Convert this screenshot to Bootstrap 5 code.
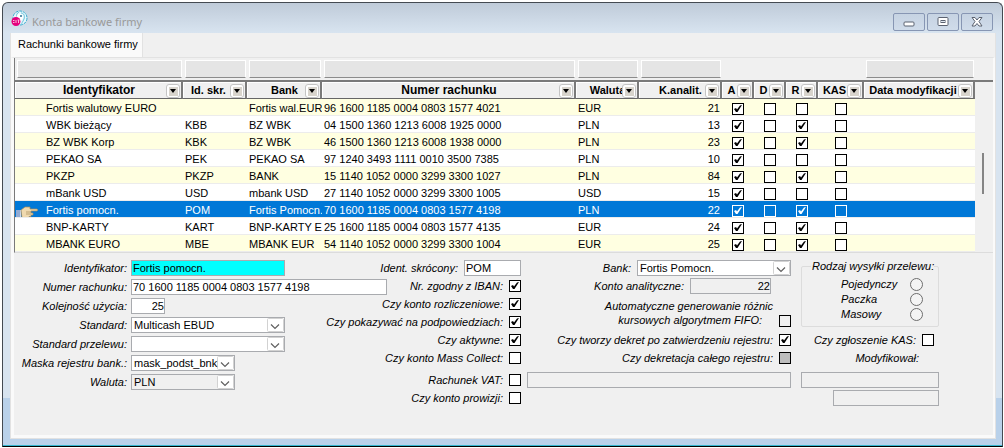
<!DOCTYPE html>
<html lang="pl">
<head>
<meta charset="utf-8">
<meta name="viewport" content="width=device-width, initial-scale=1">
<title>Konta bankowe firmy</title>
<link href="https://cdn.jsdelivr.net/npm/bootstrap@5.3.0/dist/css/bootstrap.min.css" rel="stylesheet">
<style>
  body { font: 11px/13px "Liberation Sans", Arial, sans-serif; color: #000; background: #fff; padding: 2px 1px 1px 2px; }
  input, select, button { font: inherit; color: inherit; }

  /* window frame */
  .win { border: 1px solid #444a52; border-bottom-color: #000; border-radius: 6px 6px 0 0; padding: 0 6px 7px 7px;
    background: linear-gradient(to bottom, #bfcbd9 0, #d8e4f0 30px, #d8e4f0 395px, #b9d1ea 395px);
    box-shadow: inset 0 -1px #35b6cf; }
  .titlebar { height: 30px; color: #999; font: 11px/16px "Noto Sans", "Open Sans", sans-serif; padding: 0 3px 0 1px; }
  .win-btn { width: 32px; height: 18px; border: 1px solid #8796b3; border-radius: 2px; background: linear-gradient(#c6d3e2, #d0dcea); }
  .client { background: #f0f0f0; border: 1px solid #e2e2e2; border-top: 0; }

  /* tab strip */
  .tabs { height: 24px; }
  .tabs .nav-link { background: #fafafa; color: #000; border-radius: 0; border-right: 1px solid #e2e2e2; padding: 5px 4px 0 7px; height: 24px; }
  .pane { border: 3px solid #fafafa; border-top: 1px solid #e2e2e2; border-right-width: 2px; }

  /* grid */
  .grid-table { table-layout: fixed; width: 100%; border-collapse: separate; border-spacing: 0; background: #fff; }
  .grid-box { border-left: 1px solid #7a7a7a; border-bottom: 1px solid #dcdcdc; }
  .grid-table td.blank { background: #f0f0f0; padding: 0; height: 22px; border: 0; }
  .grid-table td.blank input { display: block; width: calc(100% - 3px); height: 18px; margin: 0 1px 0 2px; background: #e5e5e5; border: 1px solid #fff; border-bottom-color: #8c8c8c; border-radius: 0; padding: 0; }
  .grid-table th { height: 19px; position: relative; background: #f0f0f0; padding: 1px 0 0 2px; text-align: center; font-weight: 700; white-space: nowrap; overflow: hidden;
    border-top: 2px solid #7a7a7a; border-bottom: 1px solid #666; border-right: 2px solid #7a7a7a; box-shadow: inset 1px 1px #fff; }
  .grid-table th.wide { font-size: 12px; }
  .grid-table th.side { padding-right: 13px; }
  .grid-table td { height: 17px; padding: 1px 2px 0; white-space: nowrap; overflow: hidden; border-bottom: 1px solid #ececec; line-height: 14px; }
  .grid-table td.tick { padding: 3px 0 0; text-align: center; }
  .grid-table .name { padding-left: 31px; position: relative; }
  .grid-table .bank { padding-right: 0; }
  .grid-table tr.odd td { background: #ffffe1; }
  .grid-table tr.current td { background: #0078d7; color: #fff; }
  .hand { position: absolute; left: 1px; top: 5px; }
  .menu-btn { position: absolute; right: 1px; top: 2px; width: 14px; height: 14px; padding: 0; border: 1px solid #c4c4c4; border-radius: 3px; background: #fff; display: flex; align-items: center; justify-content: center; }
  .menu-btn span { width: 9px; height: 9px; background: #d8d4cc; display: flex; align-items: center; justify-content: center; }
  .menu-btn span::before { content: ""; border: 3px solid transparent; border-top: 4px solid #000; border-bottom: 0; }
  .lane { width: 18px; flex: none; border-top: 2px solid #7a7a7a; margin-top: 22px; }
  .thumb { width: 2px; height: 41px; background: #858585; margin: 71px auto 0 7px; }

  /* tick boxes and radios */
  .box { appearance: none; flex: none; width: 12px; height: 12px; margin: 0; border: 1px solid #000; background: #fff center/10px 10px no-repeat; display: block; }
  td .box { margin: 0 auto; }
  .box:checked { background-image: url("data:image/svg+xml,%3Csvg xmlns='http://www.w3.org/2000/svg' viewBox='0 0 10 10'%3E%3Cpath d='M1 5L3 4 4 5.500 7 1.500 9 1 4.500 8 3 8z'/%3E%3C/svg%3E"); }
  .current .box { border-color: #fff; background-color: transparent; }
  .current .box:checked { background-image: url("data:image/svg+xml,%3Csvg xmlns='http://www.w3.org/2000/svg' viewBox='0 0 10 10'%3E%3Cpath fill='white' d='M1 5L3 4 4 5.500 7 1.500 9 1 4.500 8 3 8z'/%3E%3C/svg%3E"); }
  .box.plain { background-color: #f0f0f0; }
  .box.gray { background-color: #bdbdbd; }
  .dot { appearance: none; flex: none; width: 13px; height: 13px; margin: 0; border: 1px solid #6d6d6d; border-radius: 50%; background: #f4f4f4; }

  /* form below the grid */
  .details { padding: 7px 50px 28px 0; }
  .details label, .details legend, .details .note { font-style: italic; white-space: nowrap; }
  .fld { height: 16px; border: 1px solid #a9abaf; border-radius: 0; background-color: #fff; padding: 0 1px; }
  .fld:disabled { background-color: #f0f0f0; color: #000; opacity: 1; }
  select.fld { appearance: none; padding: 0 14px 0 2px; line-height: 14px;
    background-image: url("data:image/svg+xml,%3Csvg xmlns='http://www.w3.org/2000/svg' viewBox='0 0 17 14'%3E%3Crect x='.5' y='.5' width='16' height='13' rx='1' fill='white' stroke='%23d2d2d2'/%3E%3Cpath d='M4 6.500l4 4 4-4' fill='none' stroke='%23606060' stroke-width='1.200'/%3E%3C/svg%3E");
    background-position: right center; background-size: 17px 14px; background-repeat: no-repeat; }
  .num { text-align: right; padding-right: 0; }
  .cyan { background-color: #0ff; }
  .w-xs { width: 34px; } .w-s { width: 57px; } .w-m { width: 81px; } .w-l { width: 104px; } .w-xl { width: 154px; } .w-acc { width: 256px; } .w-date { width: 106px; }
  .first { display: grid; grid-template-columns: 113px 154px; column-gap: 4px; row-gap: 3px; width: 271px; flex: none; }
  .first label { text-align: right; line-height: 16px; justify-self: end; }
  .second { width: 236px; flex: none; }
  .second, .third { margin-top: -1px; }
  .line { display: flex; align-items: center; justify-content: flex-end; gap: 6px; height: 18px; }
  .line.tall { height: 28px; align-items: flex-end; }
  .group-gap { margin-top: 4px; }
  .third { width: 270px; flex: none; }
  .fourth { width: 138px; flex: none; margin-left: 10px; }
  .note { line-height: 14px; }
  .kind { border: 1px solid #dcdcdc; border-radius: 2px; padding: 0 15px 0 39px; height: 67px; }
  .kind legend { float: none; width: auto; font-size: 11px; line-height: 13px; margin: 0 0 4px -30px; padding: 0 0 0 1px; }
  .kind .line { height: 15px; justify-content: space-between; }
  .inset-s { padding-right: 5px; } .inset-l { padding-right: 20px; } .vat { padding-left: 6px; }
</style>
</head>
<body class="min-vh-100 d-flex">
<main class="win flex-fill d-flex flex-column">
  <header class="titlebar d-flex align-items-center">
    <svg width="17" height="17" viewBox="0 0 17 17" class="me-1 flex-shrink-0" aria-hidden="true">
      <circle cx="9" cy="8" r="7" fill="#e6f7fc" stroke="#3aaed0" stroke-dasharray="3 1"/>
      <path d="M8 2c-2 1-3 3-2 5M10 3c3 0 4 3 3 6-1 3-3 4-2 6" fill="none" stroke="#6cc3dc"/>
      <path d="M7 4c3-1 5 1 5 4l-3 4-4-4z" fill="#fff"/><circle cx="10" cy="6" r="1" fill="#2b6f95"/>
      <circle cx="5" cy="11.500" r="4.500" fill="#e5007d"/><path d="M2 10.500h1.500M2 12.500h1.500M5 10v3M6.500 10h2M7.500 10v3" stroke="#f9b6d9" fill="none"/>
    </svg>
    <span class="flex-fill pt-2">Konta bankowe firmy</span>
    <div class="d-flex pt-2" style="gap:2px">
      <button class="win-btn p-0 d-flex justify-content-center align-items-center" aria-label="Minimalizuj"><svg width="12" height="12"><rect x="1" y="6" width="10" height="4" rx="1" fill="#fff" stroke="#5b6270"/></svg></button>
      <button class="win-btn p-0 d-flex justify-content-center align-items-center" aria-label="Maksymalizuj"><svg width="12" height="12"><rect x="1" y="1.500" width="10" height="8" rx="1" fill="#fff" stroke="#5b6270"/><rect x="4" y="4.500" width="4" height="2" fill="#dfe7f0" stroke="#5b6270"/></svg></button>
      <button class="win-btn p-0 d-flex justify-content-center align-items-center" aria-label="Zamknij"><svg width="12" height="12"><path d="M1 1.500h3l2 2.500 2-2.500h3L8 5.500l3 4.500H8L6 7.500 4 10H1l3-4.500z" fill="#fff" stroke="#5b6270"/></svg></button>
    </div>
  </header>

  <div class="client flex-fill d-flex flex-column">
    <nav class="tabs nav"><a class="nav-link" href="#pane">Rachunki bankowe firmy</a></nav>
    <section class="pane flex-fill" id="pane">
      <div class="d-flex grid-box">
        <table class="grid-table">
          <colgroup>
            <col style="width:168px"><col style="width:64px"><col style="width:75px"><col style="width:254px"><col style="width:63px"><col style="width:83px">
            <col style="width:32px"><col style="width:32px"><col style="width:32px"><col style="width:46px"><col>
          </colgroup>
          <thead>
            <tr id="filters"></tr>
            <tr id="heads"></tr>
          </thead>
          <tbody id="rows"></tbody>
        </table>
        <div class="lane"><div class="thumb"></div></div>
      </div>

      <form class="details d-flex align-items-start">
        <div class="first">
          <label for="f1">Identyfikator:</label><input id="f1" class="fld w-xl cyan" value="Fortis pomocn.">
          <label for="f2">Numer rachunku:</label><input id="f2" class="fld w-acc" value="70 1600 1185 0004 0803 1577 4198">
          <label for="f3">Kolejność użycia:</label><input id="f3" class="fld w-xs num" value="25">
          <label for="f4">Standard:</label><select id="f4" class="fld w-xl"><option>Multicash EBUD</option></select>
          <label for="f5">Standard przelewu:</label><select id="f5" class="fld w-xl"><option></option></select>
          <label for="f6">Maska rejestru bank.:</label><select id="f6" class="fld w-l"><option>mask_podst_bnk</option></select>
          <label for="f7">Waluta:</label><select id="f7" class="fld w-l" disabled><option>PLN</option></select>
        </div>

        <div class="second">
          <div class="line"><label for="s1">Ident. skrócony:</label><input id="s1" class="fld w-s" value="POM"></div>
          <div class="line"><label for="s2">Nr. zgodny z IBAN:</label><input id="s2" class="box" type="checkbox" checked></div>
          <div class="line"><label for="s3">Czy konto rozliczeniowe:</label><input id="s3" class="box" type="checkbox" checked></div>
          <div class="line"><label for="s4">Czy pokazywać na podpowiedziach:</label><input id="s4" class="box" type="checkbox" checked></div>
          <div class="line"><label for="s5">Czy aktywne:</label><input id="s5" class="box" type="checkbox" checked></div>
          <div class="line"><label for="s6">Czy konto Mass Collect:</label><input id="s6" class="box" type="checkbox"></div>
          <div class="line group-gap"><label for="s7">Rachunek VAT:</label><input id="s7" class="box" type="checkbox"></div>
          <div class="line"><label for="s8">Czy konto prowizji:</label><input id="s8" class="box" type="checkbox"></div>
        </div>

        <div class="third">
          <div class="line"><label for="t1">Bank:</label><select id="t1" class="fld w-xl"><option>Fortis Pomocn.</option></select></div>
          <div class="line inset-l"><label for="t2">Konto analityczne:</label><input id="t2" class="fld w-m num" value="22" disabled></div>
          <div class="line tall group-gap"><label for="t3" class="note text-end">Automatyczne generowanie różnic<br>kursowych algorytmem FIFO:&emsp;</label><input id="t3" class="box plain" type="checkbox"></div>
          <div class="line group-gap"><label for="t4">Czy tworzy dekret po zatwierdzeniu rejestru:</label><input id="t4" class="box" type="checkbox" checked></div>
          <div class="line"><label for="t5">Czy dekretacja całego rejestru:</label><input id="t5" class="box gray" type="checkbox" disabled></div>
          <div class="line group-gap vat"><input class="fld flex-fill" aria-label="Rachunek VAT" disabled></div>
        </div>

        <div class="fourth">
          <fieldset class="kind">
            <legend>Rodzaj wysyłki przelewu:</legend>
            <div class="line"><label for="r1">Pojedynczy</label><input id="r1" class="dot" type="radio" name="kind"></div>
            <div class="line"><label for="r2">Paczka</label><input id="r2" class="dot" type="radio" name="kind"></div>
            <div class="line"><label for="r3">Masowy</label><input id="r3" class="dot" type="radio" name="kind"></div>
          </fieldset>
          <div class="line group-gap inset-s"><label for="k1">Czy zgłoszenie KAS:</label><input id="k1" class="box" type="checkbox"></div>
          <div class="line inset-l"><label for="k2">Modyfikował:</label></div>
          <div class="line group-gap"><input id="k2" class="fld w-100" disabled></div>
          <div class="line"><input class="fld w-date" aria-label="Data modyfikacji" disabled></div>
        </div>
      </form>
    </section>
  </div>
</main>

<script src="https://cdn.jsdelivr.net/npm/bootstrap@5.3.0/dist/js/bootstrap.bundle.min.js"></script>
<script>
  // label, header class, has a filter box
  const heads = [
    ['Identyfikator', 'wide', 1], ['Id. skr.', 'side', 1], ['Bank', '', 1], ['Numer rachunku', 'wide', 1], ['Waluta', '', 1], ['K.analit.', '', 1],
    ['A', 'side', 0], ['D', 'side', 0], ['R', 'side', 0], ['KAS', 'side', 0], ['Data modyfikacji', 'side', 1]
  ];
  // name, short id, bank, account, currency, analytic no., then the A D R KAS flags
  const rows = [
    ['Fortis walutowy EURO', '', 'Fortis wal.EUR', '96 1600 1185 0004 0803 1577 4021', 'EUR', 21, '1000'],
    ['WBK bieżący', 'KBB', 'BZ WBK', '04 1500 1360 1213 6008 1925 0000', 'PLN', 13, '1010'],
    ['BZ WBK Korp', 'KBK', 'BZ WBK', '46 1500 1360 1213 6008 1938 0000', 'PLN', 23, '1010'],
    ['PEKAO SA', 'PEK', 'PEKAO SA', '97 1240 3493 1111 0010 3500 7385', 'PLN', 10, '1000'],
    ['PKZP', 'PKZP', 'BANK', '15 1140 1052 0000 3299 3300 1027', 'PLN', 84, '1010'],
    ['mBank USD', 'USD', 'mbank USD', '27 1140 1052 0000 3299 3300 1005', 'USD', 15, '1000'],
    ['Fortis pomocn.', 'POM', 'Fortis Pomocn.', '70 1600 1185 0004 0803 1577 4198', 'PLN', 22, '1010'],
    ['BNP-KARTY', 'KART', 'BNP-KARTY EUR', '25 1600 1185 0004 0803 1577 4135', 'EUR', 24, '1010'],
    ['MBANK EURO', 'MBE', 'MBANK EUR', '54 1140 1052 0000 3299 3300 1004', 'EUR', 25, '1010']
  ];
  const current = 6;
  const hand = '<svg class="hand" width="22" height="12" viewBox="0 0 22 12" aria-hidden="true"><path d="M0 4h5v8H0z" fill="#c9d9f2"/><path d="M1 4v8M3 4v8" stroke="#5f7fb5"/><path d="M5 4l4-3h5v2h7q1.500 1 0 2h-6v2h2v2h-2v1.500h-2V12H6z" fill="#efd9ae" stroke="#a88a5a" stroke-width=".7"/><path d="M10 6h5M10 8h5" stroke="#a88a5a" stroke-width=".7"/></svg>';

  document.getElementById('filters').innerHTML = heads.map(h =>
    `<td class="blank">${h[2] ? `<input aria-label="Filtr: ${h[0]}">` : ''}</td>`).join('');
  document.getElementById('heads').innerHTML = heads.map(h =>
    `<th class="${h[1]}">${h[0]}<button class="menu-btn" aria-label="Menu: ${h[0]}"><span></span></button></th>`).join('');
  document.getElementById('rows').innerHTML = rows.map((r, i) => {
    const ticks = [...r[6]].map((t, n) => `<td class="tick"><input class="box" type="checkbox" aria-label="${heads[6 + n][0]}" ${t === '1' ? 'checked' : ''}></td>`).join('');
    return `<tr class="${i === current ? 'current' : i % 2 ? '' : 'odd'}"><td class="name">${i === current ? hand : ''}${r[0]}</td><td>${r[1]}</td><td class="bank">${r[2]}</td><td>${r[3]}</td><td>${r[4]}</td><td class="text-end">${r[5]}</td>${ticks}<td></td></tr>`;
  }).join('');
</script>
</body>
</html>
